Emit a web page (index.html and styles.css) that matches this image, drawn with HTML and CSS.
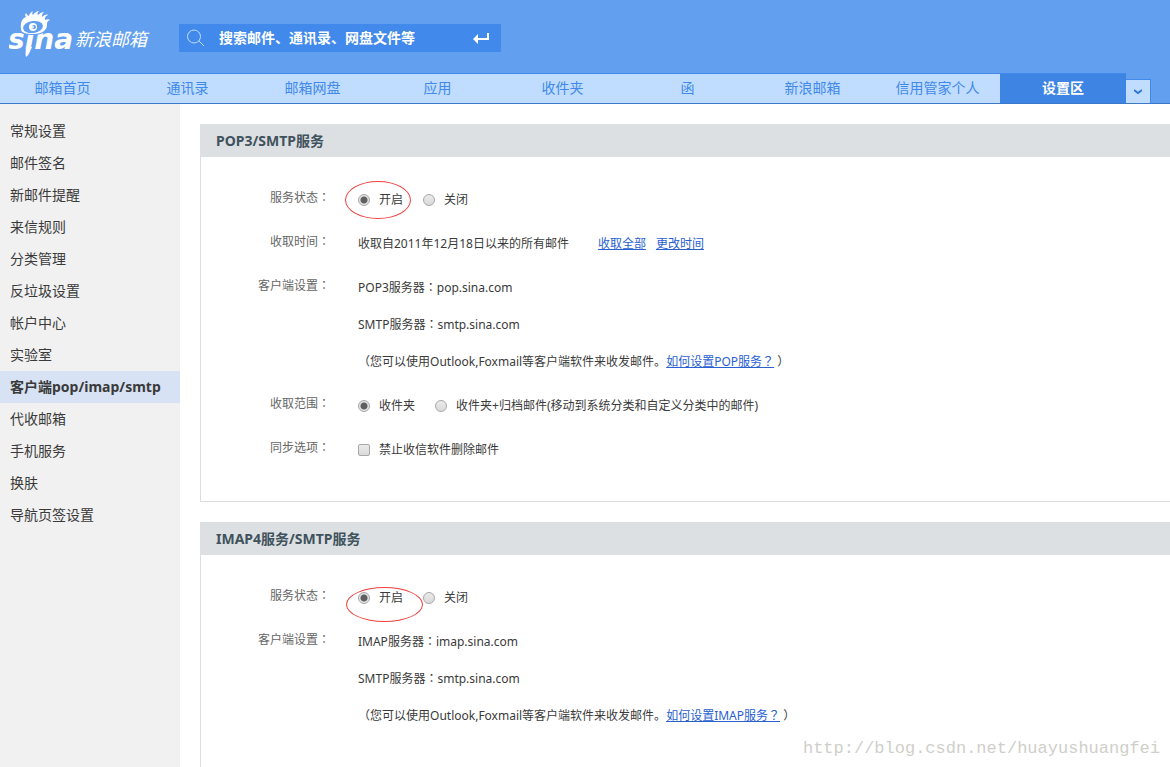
FILE: index.html
```html
<!DOCTYPE html>
<html lang="zh-CN">
<head>
<meta charset="utf-8">
<title>新浪邮箱 - 设置区</title>
<link rel="stylesheet" href="styles.css">
</head>
<body>
<div class="shell">
  <header class="header">
    <div class="topbar">
      <a class="logo" href="#" aria-label="新浪邮箱">
        <svg width="150" height="52" viewBox="0 0 150 52">
          <text class="logo-word" x="-1" y="42">sina</text>
          <path class="eye-gap" d="M9 21C9 10 40 8 42 17C42 23 34 28 24 28C16 28 9 26 9 21Z"/>
          <path class="logo-fill" d="M12 22C11 14 14 11 17 10C16 9 16 7 17 6C18 8 19 9 20 9C20 7 22 5 24 4C23 6 23 7 24 8C25 6 28 4 30 4C28 6 28 7 29 8C31 6 33 5 35 5C33 7 33 8 33 10C35 8 38 7 39 8C36 9 36 11 36 13C38 12 40 12 41 13C38 14 38 16 38 18C38 23 33 27 25 27C17 27 12 26 12 22Z"/>
          <ellipse class="eye-gap" cx="24" cy="20" rx="10" ry="6" transform="rotate(-8 24 20)"/>
          <circle class="logo-fill" cx="24" cy="20" r="4"/>
          <circle class="eye-gap" cx="25" cy="20" r="2"/>
          <circle class="logo-fill" cx="24" cy="20" r="1"/>
          <path class="logo-fill" d="M17 40L23 40C21 44 20 48 17 50C16 47 17 43 17 40Z"/>
          <text class="logo-name" x="66" y="39">新浪邮箱</text>
        </svg>
      </a>
      <form class="search" role="search">
        <svg class="search-icon" width="18" height="18" viewBox="0 0 18 18"><circle cx="7" cy="7.500" r="6.500"/><path d="M12 12L17 17"/></svg>
        <input class="search-input" type="text" aria-label="搜索" placeholder="搜索邮件、通讯录、网盘文件等">
        <button class="search-go" type="submit" aria-label="搜索">
          <svg width="16" height="12" viewBox="0 0 16 12"><path d="M0 7L5 2V6H14V1H16V8H5V12Z"/></svg>
        </button>
      </form>
    </div>
    <nav class="tabs" aria-label="主导航">
      <a class="tab" href="#">邮箱首页</a>
      <a class="tab" href="#">通讯录</a>
      <a class="tab" href="#">邮箱网盘</a>
      <a class="tab" href="#">应用</a>
      <a class="tab" href="#">收件夹</a>
      <a class="tab" href="#">函</a>
      <a class="tab" href="#">新浪邮箱</a>
      <a class="tab" href="#">信用管家个人</a>
      <a class="tab tab-active" href="#" aria-current="page">设置区</a>
      <button class="tab-more" type="button" aria-label="更多"><svg width="8" height="6" viewBox="0 0 8 6"><path d="M0 1L4 4L8 1"/></svg></button>
    </nav>
  </header>
  <div class="body">
    <nav class="sidebar" aria-label="设置">
      <a class="side-item" href="#">常规设置</a>
      <a class="side-item" href="#">邮件签名</a>
      <a class="side-item" href="#">新邮件提醒</a>
      <a class="side-item" href="#">来信规则</a>
      <a class="side-item" href="#">分类管理</a>
      <a class="side-item" href="#">反垃圾设置</a>
      <a class="side-item" href="#">帐户中心</a>
      <a class="side-item" href="#">实验室</a>
      <a class="side-item side-active" href="#" aria-current="page">客户端pop/imap/smtp</a>
      <a class="side-item" href="#">代收邮箱</a>
      <a class="side-item" href="#">手机服务</a>
      <a class="side-item" href="#">换肤</a>
      <a class="side-item" href="#">导航页签设置</a>
    </nav>
    <main class="main">
      <section class="panel">
        <h2 class="panel-title">POP3/SMTP服务</h2>
        <div class="panel-body">
          <div class="row">
            <div class="row-label">服务状态<span class="mid" lang="zh-TW">：</span></div>
            <div class="row-content">
              <div class="line options">
                <label class="option"><input class="radio" type="radio" name="pop" checked>开启<span class="mark mark-pop"></span></label>
                <label class="option"><input class="radio" type="radio" name="pop">关闭</label>
              </div>
            </div>
          </div>
          <div class="row">
            <div class="row-label">收取时间<span class="mid" lang="zh-TW">：</span></div>
            <div class="row-content">
              <div class="line times"><span class="since">收取自2011年12月18日以来的所有邮件</span><a class="link" href="#">收取全部</a><a class="link" href="#">更改时间</a></div>
            </div>
          </div>
          <div class="row">
            <div class="row-label">客户端设置<span class="mid" lang="zh-TW">：</span></div>
            <div class="row-content">
              <div class="line">POP3服务器<span class="mid" lang="zh-TW">：</span>pop.sina.com</div>
              <div class="line">SMTP服务器<span class="mid" lang="zh-TW">：</span>smtp.sina.com</div>
              <div class="line"><span class="mid" lang="zh-TW">（</span>您可以使用Outlook,Foxmail等客户端软件来收发邮件。<a class="link" href="#">如何设置POP服务<span class="mid" lang="zh-TW">？</span></a> <span class="mid" lang="zh-TW">）</span></div>
            </div>
          </div>
          <div class="row">
            <div class="row-label">收取范围<span class="mid" lang="zh-TW">：</span></div>
            <div class="row-content">
              <div class="line options">
                <label class="option"><input class="radio" type="radio" name="range" checked>收件夹</label>
                <label class="option"><input class="radio" type="radio" name="range">收件夹+归档邮件(移动到系统分类和自定义分类中的邮件)</label>
              </div>
            </div>
          </div>
          <div class="row">
            <div class="row-label">同步选项<span class="mid" lang="zh-TW">：</span></div>
            <div class="row-content">
              <div class="line options">
                <label class="option"><input class="check" type="checkbox">禁止收信软件删除邮件</label>
              </div>
            </div>
          </div>
        </div>
      </section>
      <section class="panel">
        <h2 class="panel-title">IMAP4服务/SMTP服务</h2>
        <div class="panel-body">
          <div class="row">
            <div class="row-label">服务状态<span class="mid" lang="zh-TW">：</span></div>
            <div class="row-content">
              <div class="line options">
                <label class="option"><input class="radio" type="radio" name="imap" checked>开启<span class="mark mark-imap"></span></label>
                <label class="option"><input class="radio" type="radio" name="imap">关闭</label>
              </div>
            </div>
          </div>
          <div class="row">
            <div class="row-label">客户端设置<span class="mid" lang="zh-TW">：</span></div>
            <div class="row-content">
              <div class="line">IMAP服务器<span class="mid" lang="zh-TW">：</span>imap.sina.com</div>
              <div class="line">SMTP服务器<span class="mid" lang="zh-TW">：</span>smtp.sina.com</div>
              <div class="line"><span class="mid" lang="zh-TW">（</span>您可以使用Outlook,Foxmail等客户端软件来收发邮件。<a class="link" href="#">如何设置IMAP服务<span class="mid" lang="zh-TW">？</span></a> <span class="mid" lang="zh-TW">）</span></div>
            </div>
          </div>
        </div>
      </section>
    </main>
  </div>
  <div class="watermark">http://blog.csdn.net/huayushuangfei</div>
</div>
</body>
</html>
```
FILE: styles.css
```css
* { box-sizing: border-box; }
body {
  margin: 0;
  background: #fff;
  color: #3a3a3a;
  font: 12px "Noto Sans", "Noto Sans CJK SC", sans-serif;
}
a { text-decoration: none; color: inherit; }

.shell {
  position: relative;
  display: flex;
  flex-direction: column;
  height: 100vh;
  overflow: hidden;
}

/* Header */
.header {
  flex: none;
  background: #629fef;
  border-bottom: 1px solid #3c78c8;
}
.topbar {
  display: flex;
  align-items: center;
  gap: 20px;
  height: 73px;
  padding: 0 9px;
}
.logo { display: flex; margin-bottom: 8px; }
.logo-word {
  font: italic bold 28px "DejaVu Sans", sans-serif;
  fill: #fff;
}
.logo-name {
  font: italic 18px "Noto Sans CJK SC", sans-serif;
  fill: #fff;
}
.logo-fill { fill: #fff; }
.eye-gap { fill: #629fef; }

.search {
  display: flex;
  align-items: center;
  width: 322px;
  height: 28px;
  margin-bottom: -3px;
  padding: 0 12px 0 8px;
  background: #4189ea;
}
.search-icon { flex: none; fill: none; stroke: #c4dcfc; stroke-width: 1; }
.search-input {
  flex: 1;
  min-width: 0;
  padding: 0 0 2px 14px;
  border: 0;
  outline: 0;
  background: none;
  color: #fff;
  font: bold 14px "Noto Sans", "Noto Sans CJK SC", sans-serif;
}
.search-input::placeholder { color: #fff; opacity: 1; }
.search-go { display: flex; padding: 0; border: 0; background: none; fill: #fff; }

.tabs { display: flex; align-items: flex-end; height: 30px; }
.tab {
  flex: 0 1 125px;
  height: 30px;
  border-top: 1px solid #4189ea;
  background: #c0ddff;
  color: #4189ea;
  font-size: 14px;
  line-height: 27px;
  text-align: center;
  white-space: nowrap;
}
.tab-active { flex-basis: 126px; background: #3e84e3; color: #fff; font-weight: bold; }
.tab-more {
  display: flex;
  align-items: center;
  justify-content: center;
  width: 25px;
  height: 24px;
  padding: 0;
  border: 1px solid #4189ea;
  border-width: 1px 1px 0 0;
  background: #c0ddff;
}
.tab-more svg { fill: none; stroke: #2f78dc; stroke-width: 2; }

/* Columns */
.body { display: flex; flex: 1; min-height: 0; }
.sidebar { flex: none; width: 180px; padding-top: 11px; background: #f1f1f1; }
.side-item {
  display: block;
  padding-left: 10px;
  font-size: 14px;
  line-height: 32px;
  white-space: nowrap;
}
.side-active { background: #d7e3f4; font-weight: bold; }
.main {
  display: flex;
  flex: 1;
  flex-direction: column;
  gap: 20px;
  min-width: 0;
  padding: 20px 0 0 20px;
  overflow: auto;
  scrollbar-width: none;
}

/* Panels */
.panel { flex: none; }
.panel-title {
  margin: 0;
  padding-left: 16px;
  background: #dce0e3;
  color: #40525c;
  font-size: 14px;
  line-height: 33px;
}
.panel-body {
  display: flex;
  flex-direction: column;
  gap: 7px;
  padding: 24px 0 33px;
  border: 1px solid #dcdfe1;
  border-width: 0 0 1px 1px;
}
.row { display: flex; gap: 28px; }
.row-label { flex: none; width: 129px; color: #666; line-height: 33px; text-align: right; }
.row-content { flex: 1; min-width: 0; }
.line { height: 37px; line-height: 37px; white-space: nowrap; }
.mid { font-family: "Noto Sans CJK TC", sans-serif; line-height: 1; }
.link { color: #2a5fd0; text-decoration: underline; }
.times { display: flex; gap: 10px; }
.since { margin-right: 19px; }
.options { display: flex; gap: 20px; }
.option { position: relative; display: flex; align-items: center; gap: 9px; }

.radio, .check {
  appearance: none;
  flex: none;
  width: 12px;
  height: 12px;
  margin: 0;
  border: 1px solid #a8a8a8;
  background: linear-gradient(#eaeaea, #dadada);
}
.radio { border-radius: 50%; }
.check { border-radius: 2px; }
.radio:checked { background: radial-gradient(circle, #606060 0 3px, #e4e4e4 4px); }

/* Hand-drawn highlight rings */
.mark {
  position: absolute;
  border: 1px solid #f0403c;
  border-radius: 50%;
  pointer-events: none;
}
.mark-pop { left: -13px; top: 0; width: 66px; height: 38px; }
.mark-imap { left: -12px; top: 8px; width: 77px; height: 35px; }

.watermark {
  position: absolute;
  right: 10px;
  bottom: 9px;
  color: #cfcfca;
  font: 17px "Liberation Mono", monospace;
  pointer-events: none;
}
```
